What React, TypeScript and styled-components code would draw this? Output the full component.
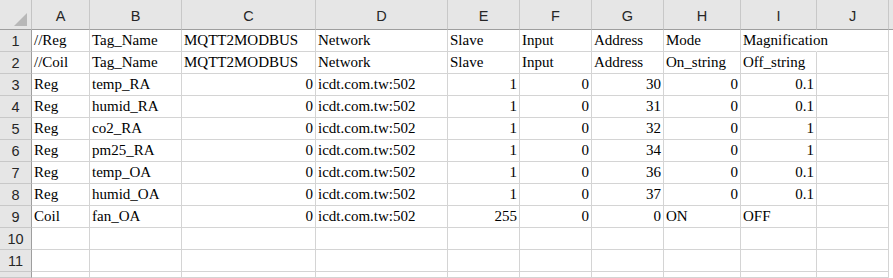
import React from 'react'
import styled, { createGlobalStyle } from 'styled-components'

const GlobalStyle = createGlobalStyle`
  html, body {
    margin: 0;
    padding: 0;
    background: #ffffff;
    overflow: hidden;
  }
`

// column widths incl. the 1px grid line on the right
const COLS = ['A', 'B', 'C', 'D', 'E', 'F', 'G', 'H', 'I', 'J']
const WIDTHS = [58, 92, 134, 132, 72, 72, 72, 77, 76, 72]

type Align = 'left' | 'right'
// [text, align, spills into the next (empty) cell]
type CellData = [string, Align, boolean?]

const L = (v: string, spill?: boolean): CellData => [v, 'left', spill]
const R = (v: string): CellData => [v, 'right']

const ROWS: CellData[][] = [
  [L('//Reg'), L('Tag_Name'), L('MQTT2MODBUS'), L('Network'), L('Slave'), L('Input'), L('Address'), L('Mode'), L('Magnification', true)],
  [L('//Coil'), L('Tag_Name'), L('MQTT2MODBUS'), L('Network'), L('Slave'), L('Input'), L('Address'), L('On_string'), L('Off_string')],
  [L('Reg'), L('temp_RA'), R('0'), L('icdt.com.tw:502'), R('1'), R('0'), R('30'), R('0'), R('0.1')],
  [L('Reg'), L('humid_RA'), R('0'), L('icdt.com.tw:502'), R('1'), R('0'), R('31'), R('0'), R('0.1')],
  [L('Reg'), L('co2_RA'), R('0'), L('icdt.com.tw:502'), R('1'), R('0'), R('32'), R('0'), R('1')],
  [L('Reg'), L('pm25_RA'), R('0'), L('icdt.com.tw:502'), R('1'), R('0'), R('34'), R('0'), R('1')],
  [L('Reg'), L('temp_OA'), R('0'), L('icdt.com.tw:502'), R('1'), R('0'), R('36'), R('0'), R('0.1')],
  [L('Reg'), L('humid_OA'), R('0'), L('icdt.com.tw:502'), R('1'), R('0'), R('37'), R('0'), R('0.1')],
  [L('Coil'), L('fan_OA'), R('0'), L('icdt.com.tw:502'), R('255'), R('0'), R('0'), L('ON'), L('OFF')],
  [],
  [],
]

const Sheet = styled.div`
  display: grid;
  grid-template-columns: 32px ${WIDTHS.map(w => `${w}px`).join(' ')} 1fr;
  grid-template-rows: 30px repeat(${ROWS.length}, 22px) 1fr;
  width: 893px;
  height: 278px;
  overflow: hidden;
  box-sizing: border-box;
`

const Corner = styled.div`
  display: flex;
  align-items: flex-end;
  justify-content: flex-end;
  padding: 0 4px 3px 0;
  background: #e6e6e6;
  border-right: 1px solid #c4c4c4;
  border-bottom: 1px solid #9e9e9e;
`

const ColHead = styled.div`
  display: flex;
  align-items: center;
  justify-content: center;
  padding-top: 3px;
  background: #e6e6e6;
  border-right: 1px solid #c8c8c8;
  border-bottom: 1px solid #9e9e9e;
  font-family: 'Liberation Sans', Arial, sans-serif;
  font-size: 14.5px;
  color: #262626;
`

const HeadFill = styled.div`
  background: #e6e6e6;
  border-bottom: 1px solid #9e9e9e;
`

const RowHead = styled.div`
  display: flex;
  align-items: center;
  justify-content: center;
  padding-top: 1px;
  background: #e6e6e6;
  border-right: 1px solid #9e9e9e;
  border-bottom: 1px solid #c8c8c8;
  font-family: 'Liberation Sans', Arial, sans-serif;
  font-size: 14.5px;
  color: #262626;
`

const Cell = styled.div<{ $align: Align; $spill?: boolean }>`
  position: relative;
  z-index: ${p => (p.$spill ? 1 : 0)};
  display: flex;
  align-items: flex-end;
  justify-content: ${p => (p.$align === 'right' ? 'flex-end' : 'flex-start')};
  padding: 0 2px 1px 2px;
  border-right: 1px solid ${p => (p.$spill ? '#ffffff' : '#d4d4d4')};
  border-bottom: 1px solid #d4d4d4;
  font-family: 'Liberation Serif', 'Times New Roman', 'Noto Sans CJK TC', serif;
  font-size: 15px;
  line-height: 20px;
  color: #000000;
  white-space: nowrap;
  overflow: visible;
  min-width: 0;
`

const Tail = styled.div`
  background: #ffffff;
`

function CornerTriangle () {
  return (
    <svg width='13' height='13' viewBox='0 0 13 13'>
      <polygon points='13,0 13,13 0,13' fill='#b8b8b8' />
    </svg>
  )
}

export default function App () {
  return (
    <>
      <GlobalStyle />
      <Sheet>
        <Corner><CornerTriangle /></Corner>
        {COLS.map(c => <ColHead key={c}>{c}</ColHead>)}
        <HeadFill />
        {ROWS.map((row, r) => (
          <React.Fragment key={r}>
            <RowHead>{r + 1}</RowHead>
            {COLS.map((c, i) => {
              const cell = row[i]
              return (
                <Cell key={c} $align={cell ? cell[1] : 'left'} $spill={cell ? cell[2] : false}>
                  {cell ? cell[0] : ''}
                </Cell>
              )
            })}
            <Tail />
          </React.Fragment>
        ))}
        {/* partly visible row below the last numbered one */}
        <RowHead />
        {COLS.map(c => <Cell key={c} $align='left' />)}
        <Tail />
      </Sheet>
    </>
  )
}
